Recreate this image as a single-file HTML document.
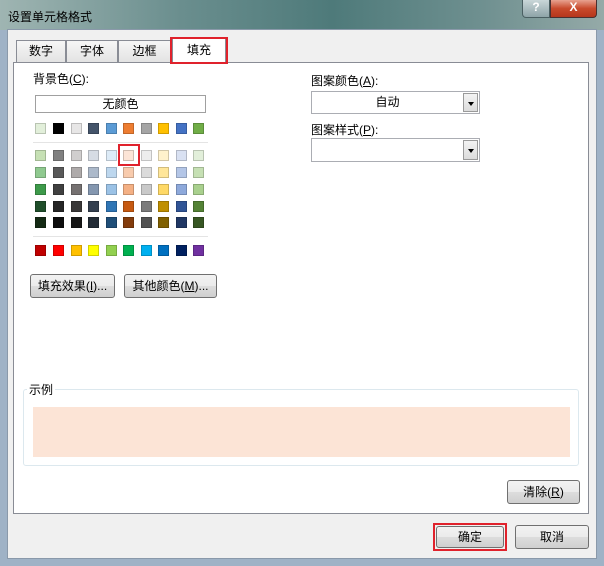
<!DOCTYPE html>
<html><head><meta charset="utf-8"><style>
*{box-sizing:border-box;margin:0;padding:0}
body{width:604px;height:566px;overflow:hidden;position:relative;font-family:"Liberation Sans","Noto Sans CJK SC",sans-serif;font-size:12px;color:#000;background:#9fb2c6}
.a{position:absolute}
.btn{position:absolute;border:1px solid #707070;border-radius:3px;background:linear-gradient(#f2f2f2,#ebebeb 50%,#dddddd 51%,#cfcfcf);text-align:center;font-size:12px}
.sw{position:absolute;width:11px;height:11px;border:1px solid rgba(0,0,0,.18)}
.dd{position:absolute;background:#fff;border:1px solid #abadb3}
.arr{position:absolute;right:1px;top:1px;bottom:1px;width:15px;background:linear-gradient(#f3f3f3,#dcdcdc);border:1px solid #9a9a9a}
.arr:after{content:"";position:absolute;left:4px;top:8px;border:3px solid transparent;border-top:4px solid #000}
</style></head><body>
<div class="a" style="left:0;top:0;width:604px;height:30px;background:linear-gradient(90deg,#9fb5b2,#6a8e8e 30%,#4e7a7a 55%,#6f9090 80%,#95aaa8)"></div>
<div class="a" style="left:8px;top:8px;font-size:12px;color:#000">设置单元格格式</div>
<div class="a" style="left:522px;top:0;width:28px;height:18px;background:linear-gradient(#c9d6d8,#8ea4a8);border:1px solid #4a5f62;border-top:none;border-radius:0 0 0 4px;color:#fff;text-align:center;font-weight:bold;font-size:12px">?</div>
<div class="a" style="left:550px;top:0;width:47px;height:18px;background:linear-gradient(#e8a290,#c84a2c 50%,#b6361c);border:1px solid #4a3030;border-top:none;border-radius:0 0 4px 0;color:#fff;text-align:center;font-weight:bold;font-size:12px">X</div>
<div class="a" style="left:7px;top:29px;width:590px;height:530px;background:#f0f0f0;border:1px solid #8a99aa"></div>
<div class="a" style="left:16px;top:40px;width:50px;height:23px;background:linear-gradient(#f6f6f6,#e2e2e2);border:1px solid #898c95;border-bottom:none;text-align:center;line-height:21px">数字</div>
<div class="a" style="left:66px;top:40px;width:52px;height:23px;background:linear-gradient(#f6f6f6,#e2e2e2);border:1px solid #898c95;border-bottom:none;text-align:center;line-height:21px">字体</div>
<div class="a" style="left:118px;top:40px;width:53px;height:23px;background:linear-gradient(#f6f6f6,#e2e2e2);border:1px solid #898c95;border-bottom:none;text-align:center;line-height:21px">边框</div>
<div class="a" style="left:13px;top:62px;width:576px;height:452px;background:#fff;border:1px solid #898c95"></div>
<div class="a" style="left:172px;top:38px;width:54px;height:26px;background:#fff;border:1px solid #898c95;border-bottom:none;text-align:center;line-height:22px">填充</div>
<div class="a" style="left:170px;top:37px;width:58px;height:27px;border:2px solid #e0222c"></div>
<div class="a" style="left:33px;top:70px">背景色(<u>C</u>):</div>
<div class="a" style="left:35px;top:95px;width:171px;height:18px;border:1px solid #a0a0a0;background:#fff;text-align:center;line-height:16px">无颜色</div>
<div class="a" style="left:33px;top:142px;width:175px;height:1px;background:#e4e4e4"></div>
<div class="a" style="left:33px;top:236px;width:175px;height:1px;background:#e4e4e4"></div>
<div id="pal"></div>
<div class="a" style="left:118px;top:144px;width:22px;height:22px;border:2px solid #e0222c"></div>
<div class="btn" style="left:30px;top:274px;width:85px;height:24px;line-height:22px">填充效果(<u>I</u>)...</div>
<div class="btn" style="left:124px;top:274px;width:93px;height:24px;line-height:22px">其他颜色(<u>M</u>)...</div>
<div class="a" style="left:311px;top:72px">图案颜色(<u>A</u>):</div>
<div class="dd" style="left:311px;top:91px;width:169px;height:23px"><div style="position:absolute;left:0;right:16px;text-align:center;line-height:21px">自动</div><div class="arr"></div></div>
<div class="a" style="left:311px;top:121px">图案样式(<u>P</u>):</div>
<div class="dd" style="left:311px;top:138px;width:169px;height:24px"><div class="arr"></div></div>
<div class="a" style="left:23px;top:389px;width:556px;height:77px;border:1px solid #dce8ee;border-radius:3px"></div>
<div class="a" style="left:27px;top:381px;background:#fff;padding:0 2px">示例</div>
<div class="a" style="left:33px;top:407px;width:537px;height:50px;background:#fce4d6"></div>
<div class="btn" style="left:507px;top:480px;width:73px;height:24px;line-height:22px">清除(<u>R</u>)</div>
<div class="btn" style="left:436px;top:526px;width:68px;height:22px;line-height:20px">确定</div>
<div class="a" style="left:433px;top:523px;width:74px;height:28px;border:2px solid #e0222c"></div>
<div class="btn" style="left:515px;top:525px;width:74px;height:24px;line-height:22px">取消</div>
<script>
var cx=[41,59,77,94,112,129,147,164,182,199];
var rows=[
[129,["#e2efda","#000000","#e7e6e6","#44546a","#5b9bd5","#ed7d31","#a5a5a5","#ffc000","#4472c4","#70ad47"]],
[156,["#c6e0b4","#808080","#d0cece","#d6dce4","#ddebf7","#fce4d6","#ededed","#fff2cc","#d9e1f2","#e2efda"]],
[173,["#8fc98f","#595959","#aeaaaa","#acb9ca","#bdd7ee","#f8cbad","#dbdbdb","#ffe699","#b4c6e7","#c6e0b4"]],
[190,["#3d9a4a","#404040","#757171","#8497b0","#9bc2e6","#f4b084","#c9c9c9","#ffd966","#8ea9db","#a9d08e"]],
[207,["#1f4e2a","#262626","#3a3838","#333f4f","#2f75b5","#c65911","#7b7b7b","#bf8f00","#305496","#548235"]],
[223,["#142a14","#0d0d0d","#161616","#222b35","#1f4e78","#833c0c","#525252","#806000","#203764","#375623"]],
[251,["#c00000","#ff0000","#ffc000","#ffff00","#92d050","#00b050","#00b0f0","#0070c0","#002060","#7030a0"]]];
var h="";rows.forEach(function(r){r[1].forEach(function(c,i){h+='<div class="sw" style="left:'+(cx[i]-6)+'px;top:'+(r[0]-6)+'px;background:'+c+'"></div>';});});
document.getElementById("pal").innerHTML=h;
</script>
</body></html>
